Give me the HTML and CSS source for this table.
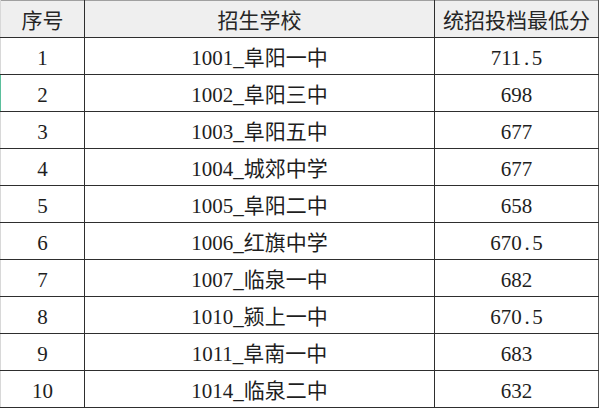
FILE: index.html
```html
<!DOCTYPE html>
<html lang="zh-CN">
<head>
<meta charset="utf-8">
<title>统招投档最低分</title>
<link rel="stylesheet" href="styles.css">
</head>
<body>
<table class="sheet">
  <colgroup>
    <col class="c-no">
    <col class="c-school">
    <col class="c-score">
  </colgroup>
  <thead>
    <tr class="head">
      <th class="first">序号</th>
      <th>招生学校</th>
      <th>统招投档最低分</th>
    </tr>
  </thead>
  <tbody>
    <tr><td class="first">1</td><td>1001_阜阳一中</td><td>711<span class="dot">.</span>5</td></tr>
    <tr><td class="first sel">2</td><td>1002_阜阳三中</td><td>698</td></tr>
    <tr><td class="first">3</td><td>1003_阜阳五中</td><td>677</td></tr>
    <tr><td class="first">4</td><td>1004_城郊中学</td><td>677</td></tr>
    <tr><td class="first">5</td><td>1005_阜阳二中</td><td>658</td></tr>
    <tr><td class="first">6</td><td>1006_红旗中学</td><td>670<span class="dot">.</span>5</td></tr>
    <tr><td class="first">7</td><td>1007_临泉一中</td><td>682</td></tr>
    <tr><td class="first">8</td><td>1010_颍上一中</td><td>670<span class="dot">.</span>5</td></tr>
    <tr><td class="first">9</td><td>1011_阜南一中</td><td>683</td></tr>
    <tr><td class="first">10</td><td>1014_临泉二中</td><td>632</td></tr>
  </tbody>
</table>
</body>
</html>
```
FILE: styles.css
```css
html, body {
  margin: 0;
  padding: 0;
  background: #ffffff;
}

.sheet {
  border-collapse: collapse;
  table-layout: fixed;
  width: 598px;
  font-family: "Liberation Serif", "Noto Sans CJK SC", serif;
  font-size: 21px;
  color: #1e1e1e;
  border-top: 1px solid #a0a0a0;
  border-right: 1px solid #555555;
}

.c-no { width: 84px; }
.c-school { width: 350px; }
.c-score { width: 164px; }

.sheet th,
.sheet td {
  height: 37px;
  padding: 4px 0 0 0;
  box-sizing: border-box;
  text-align: center;
  vertical-align: middle;
  font-weight: normal;
  white-space: nowrap;
  border-left: 1px solid #2e2e2e;
  border-bottom: 1px solid #2e2e2e;
  line-height: 1;
}

.sheet th.first,
.sheet td.first {
  border-left: 1px solid #d8d8d8;
}

.sheet td.sel {
  border-left: 1px solid #5bbf9c;
}

.head th {
  background: #efefef;
  color: #262626;
}

.dot {
  display: inline-block;
  width: 0.5em;
  text-align: center;
}
```
